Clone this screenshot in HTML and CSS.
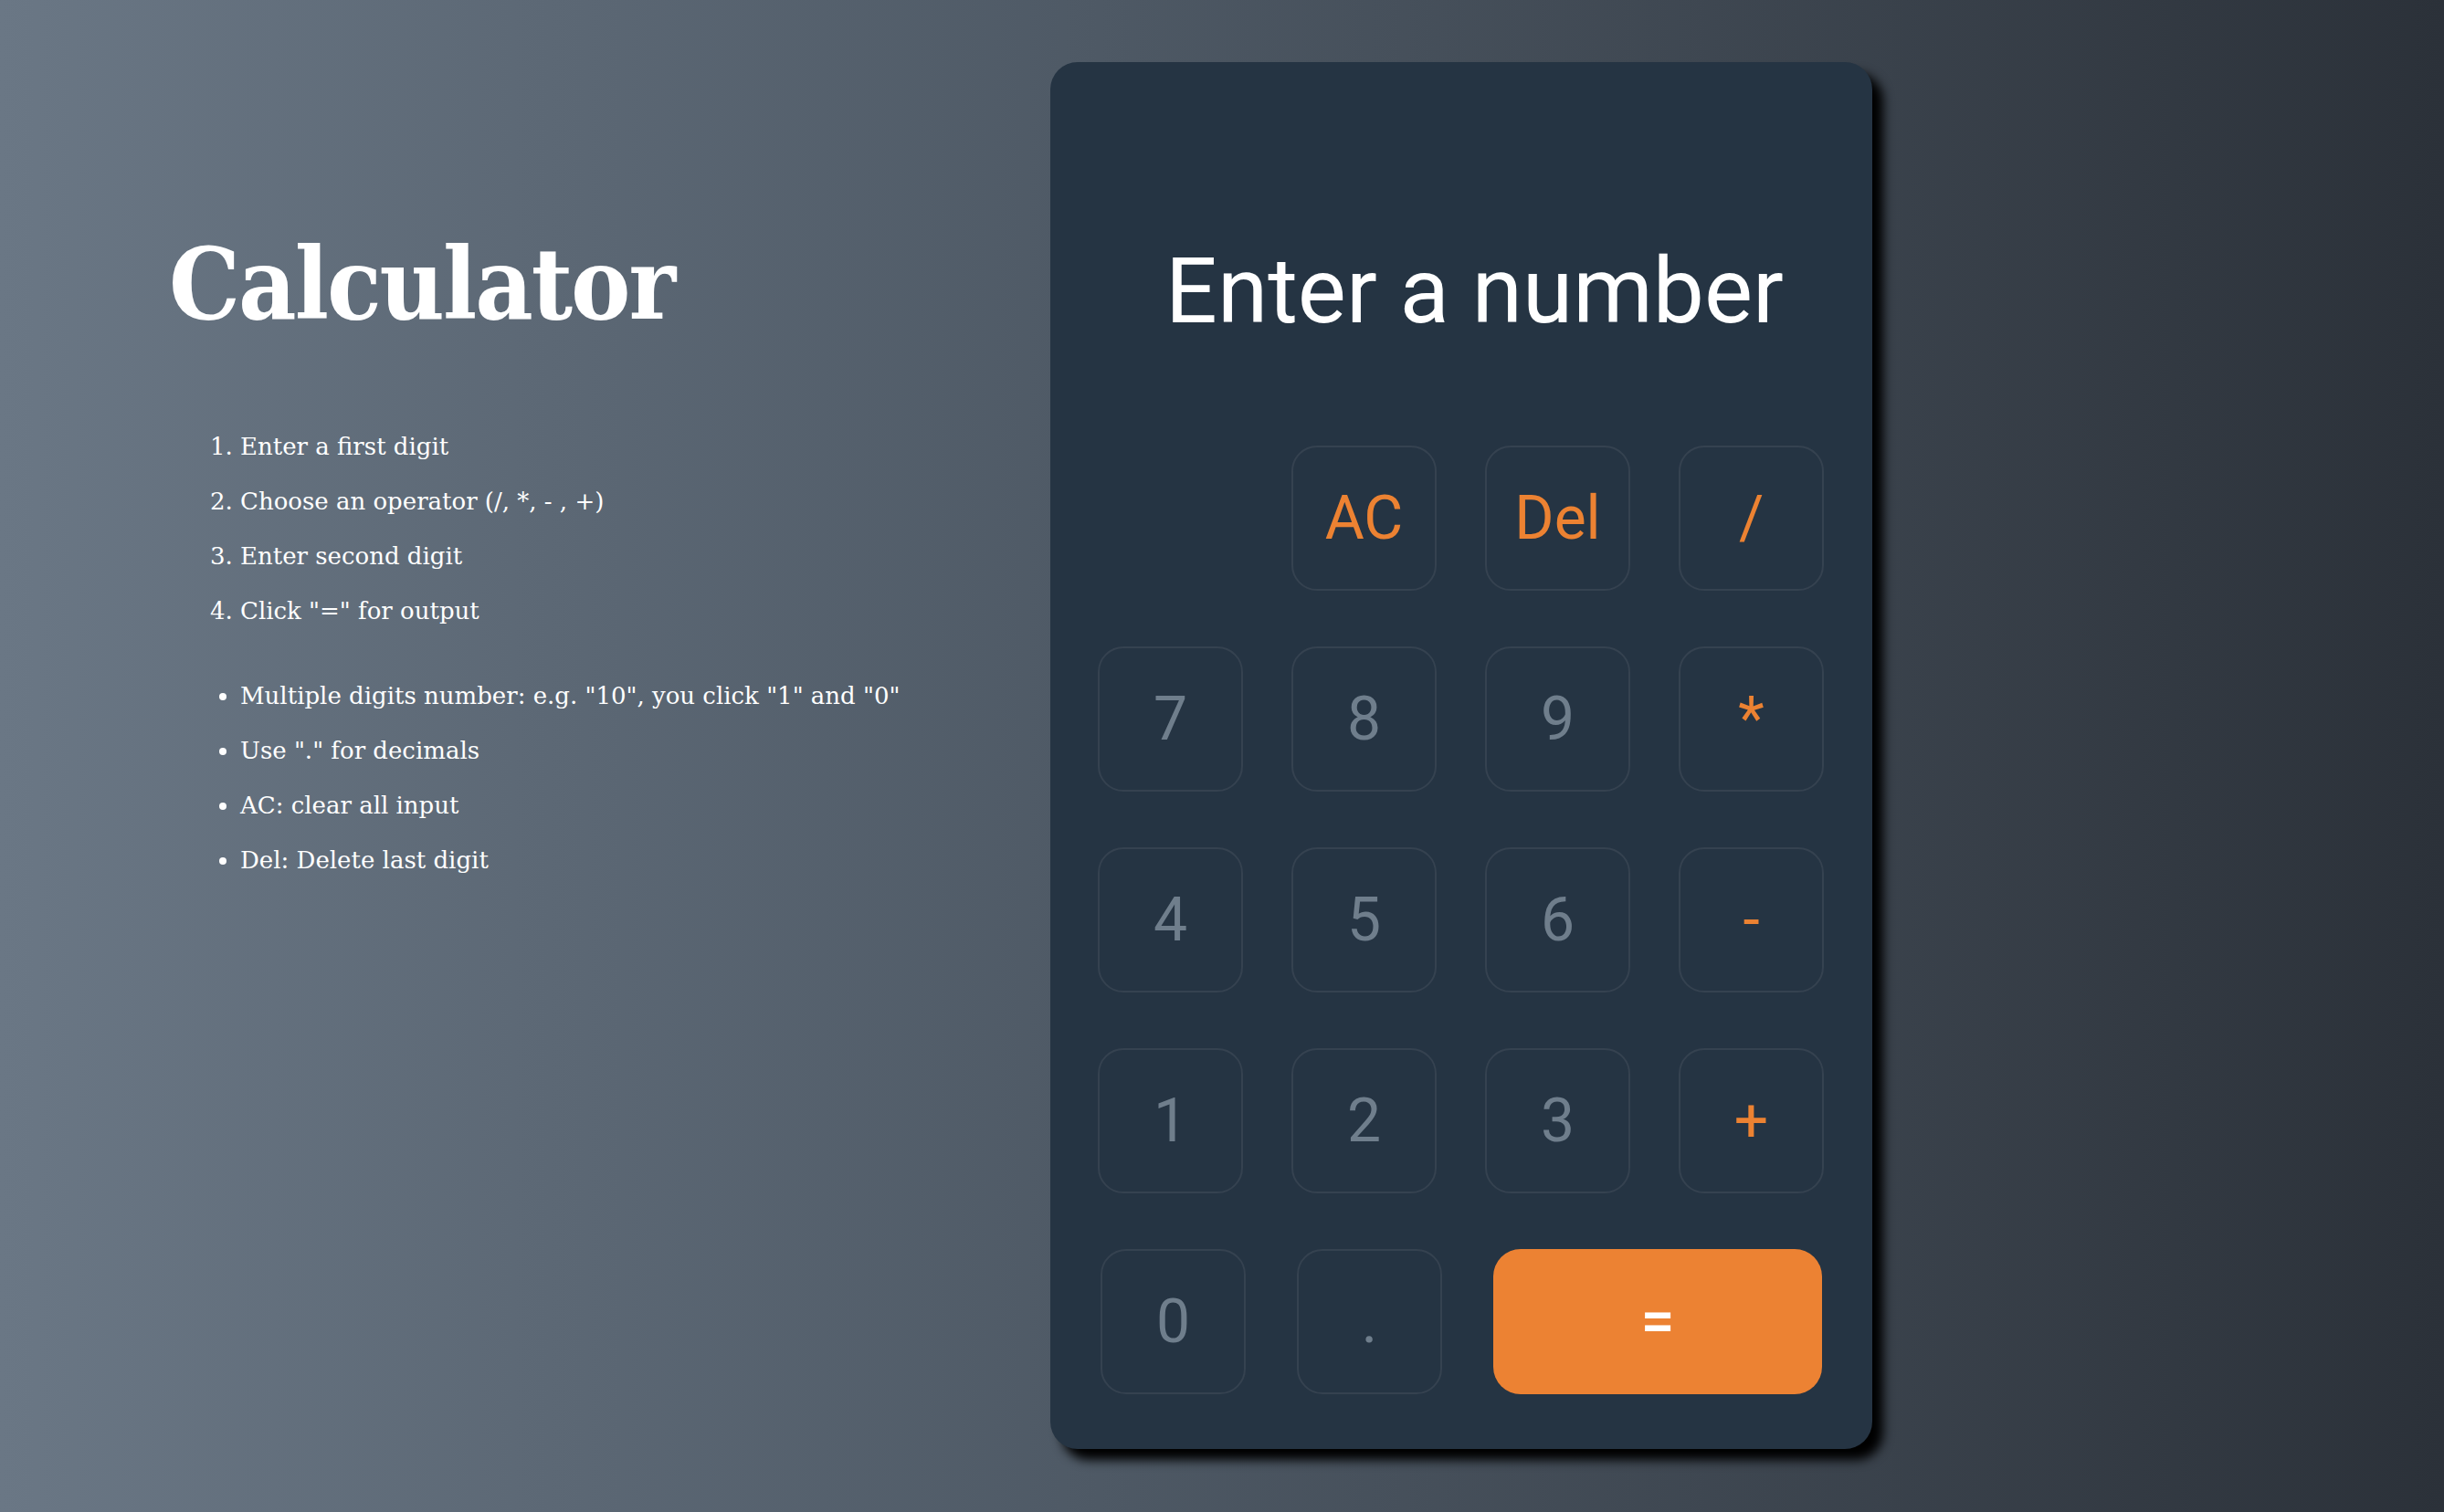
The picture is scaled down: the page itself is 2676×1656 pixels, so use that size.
FILE: index.html
```html
<!DOCTYPE html>
<html lang="en">
<head>
<meta charset="utf-8">
<title>Calculator</title>
<link rel="stylesheet" href="styles.css">
</head>
<body>
<main class="page">
  <section class="intro">
    <h1 class="title">Calculator</h1>
    <ol class="steps">
      <li>Enter a first digit</li>
      <li>Choose an operator (/, *, - , +)</li>
      <li>Enter second digit</li>
      <li>Click "=" for output</li>
    </ol>
    <ul class="tips">
      <li>Multiple digits number: e.g. "10", you click "1" and "0"</li>
      <li>Use "." for decimals</li>
      <li>AC: clear all input</li>
      <li>Del: Delete last digit</li>
    </ul>
  </section>
  <div class="calc">
    <div class="display">Enter a number</div>
    <div class="keys">
      <div class="row">
        <span class="blank"></span>
        <button class="key op">AC</button>
        <button class="key op">Del</button>
        <button class="key op">/</button>
      </div>
      <div class="row">
        <button class="key">7</button>
        <button class="key">8</button>
        <button class="key">9</button>
        <button class="key op">*</button>
      </div>
      <div class="row">
        <button class="key">4</button>
        <button class="key">5</button>
        <button class="key">6</button>
        <button class="key op">-</button>
      </div>
      <div class="row">
        <button class="key">1</button>
        <button class="key">2</button>
        <button class="key">3</button>
        <button class="key op">+</button>
      </div>
      <div class="row last">
        <button class="key">0</button>
        <button class="key">.</button>
        <button class="key equals">=</button>
      </div>
    </div>
  </div>
</main>
</body>
</html>
```
FILE: styles.css
```css
html, body {
  margin: 0;
  padding: 0;
}

body {
  height: 100vh;
  overflow: hidden;
  background: linear-gradient(to right, #6a7785 0%, #4e5965 45%, #2b3139 100%);
  color: #ffffff;
}

.page {
  display: flex;
  align-items: flex-start;
  box-sizing: border-box;
  height: 100vh;
  padding-top: 68px;
}

.intro {
  box-sizing: border-box;
  width: 1150px;
  flex: none;
  padding-left: 185px;
  padding-top: 184px;
  font-family: "DejaVu Serif", "Liberation Serif", serif;
}

.title {
  margin: 0;
  font-family: "DejaVu Serif", serif;
  font-stretch: condensed;
  font-weight: 700;
  font-size: 109px;
  line-height: 118px;
  letter-spacing: -2px;
}

.steps,
.tips {
  margin: 0;
  padding-left: 78px;
  font-size: 26px;
  line-height: 60px;
  color: #ffffff;
}

.steps {
  margin-top: 89px;
}

.tips {
  margin-top: 33px;
}

.calc {
  box-sizing: border-box;
  width: 900px;
  height: 1519px;
  flex: none;
  padding: 0 53px 0 52px;
  background: #253443;
  border-radius: 30px;
  box-shadow: 12px 12px 12px #000000;
  font-family: Roboto, "Liberation Sans", sans-serif;
}

.display {
  box-sizing: border-box;
  height: 420px;
  padding-top: 201px;
  padding-left: 30px;
  font-size: 100px;
  line-height: 100px;
  text-align: center;
  color: #ffffff;
  white-space: nowrap;
}

.keys {
  display: flex;
  flex-direction: column;
  gap: 61px;
}

.row {
  display: grid;
  grid-template-columns: repeat(4, 159px);
  column-gap: 53px;
  height: 159px;
}

.row.last {
  grid-template-columns: 159px 159px 1fr;
  column-gap: 56px;
  padding: 0 2px 0 3px;
}

.key {
  box-sizing: border-box;
  height: 159px;
  margin: 0;
  padding: 0;
  border: 2px solid #354250;
  border-radius: 28px;
  background: #253443;
  font-family: Roboto, "Liberation Sans", sans-serif;
  font-size: 66px;
  font-weight: 400;
  color: #6f7e8c;
  line-height: 1;
  cursor: pointer;
}

.key.op {
  color: #ec8232;
}

.key.equals {
  border: none;
  border-radius: 30px;
  background: #ec8233;
  color: #ffffff;
  font-weight: 500;
}
```
